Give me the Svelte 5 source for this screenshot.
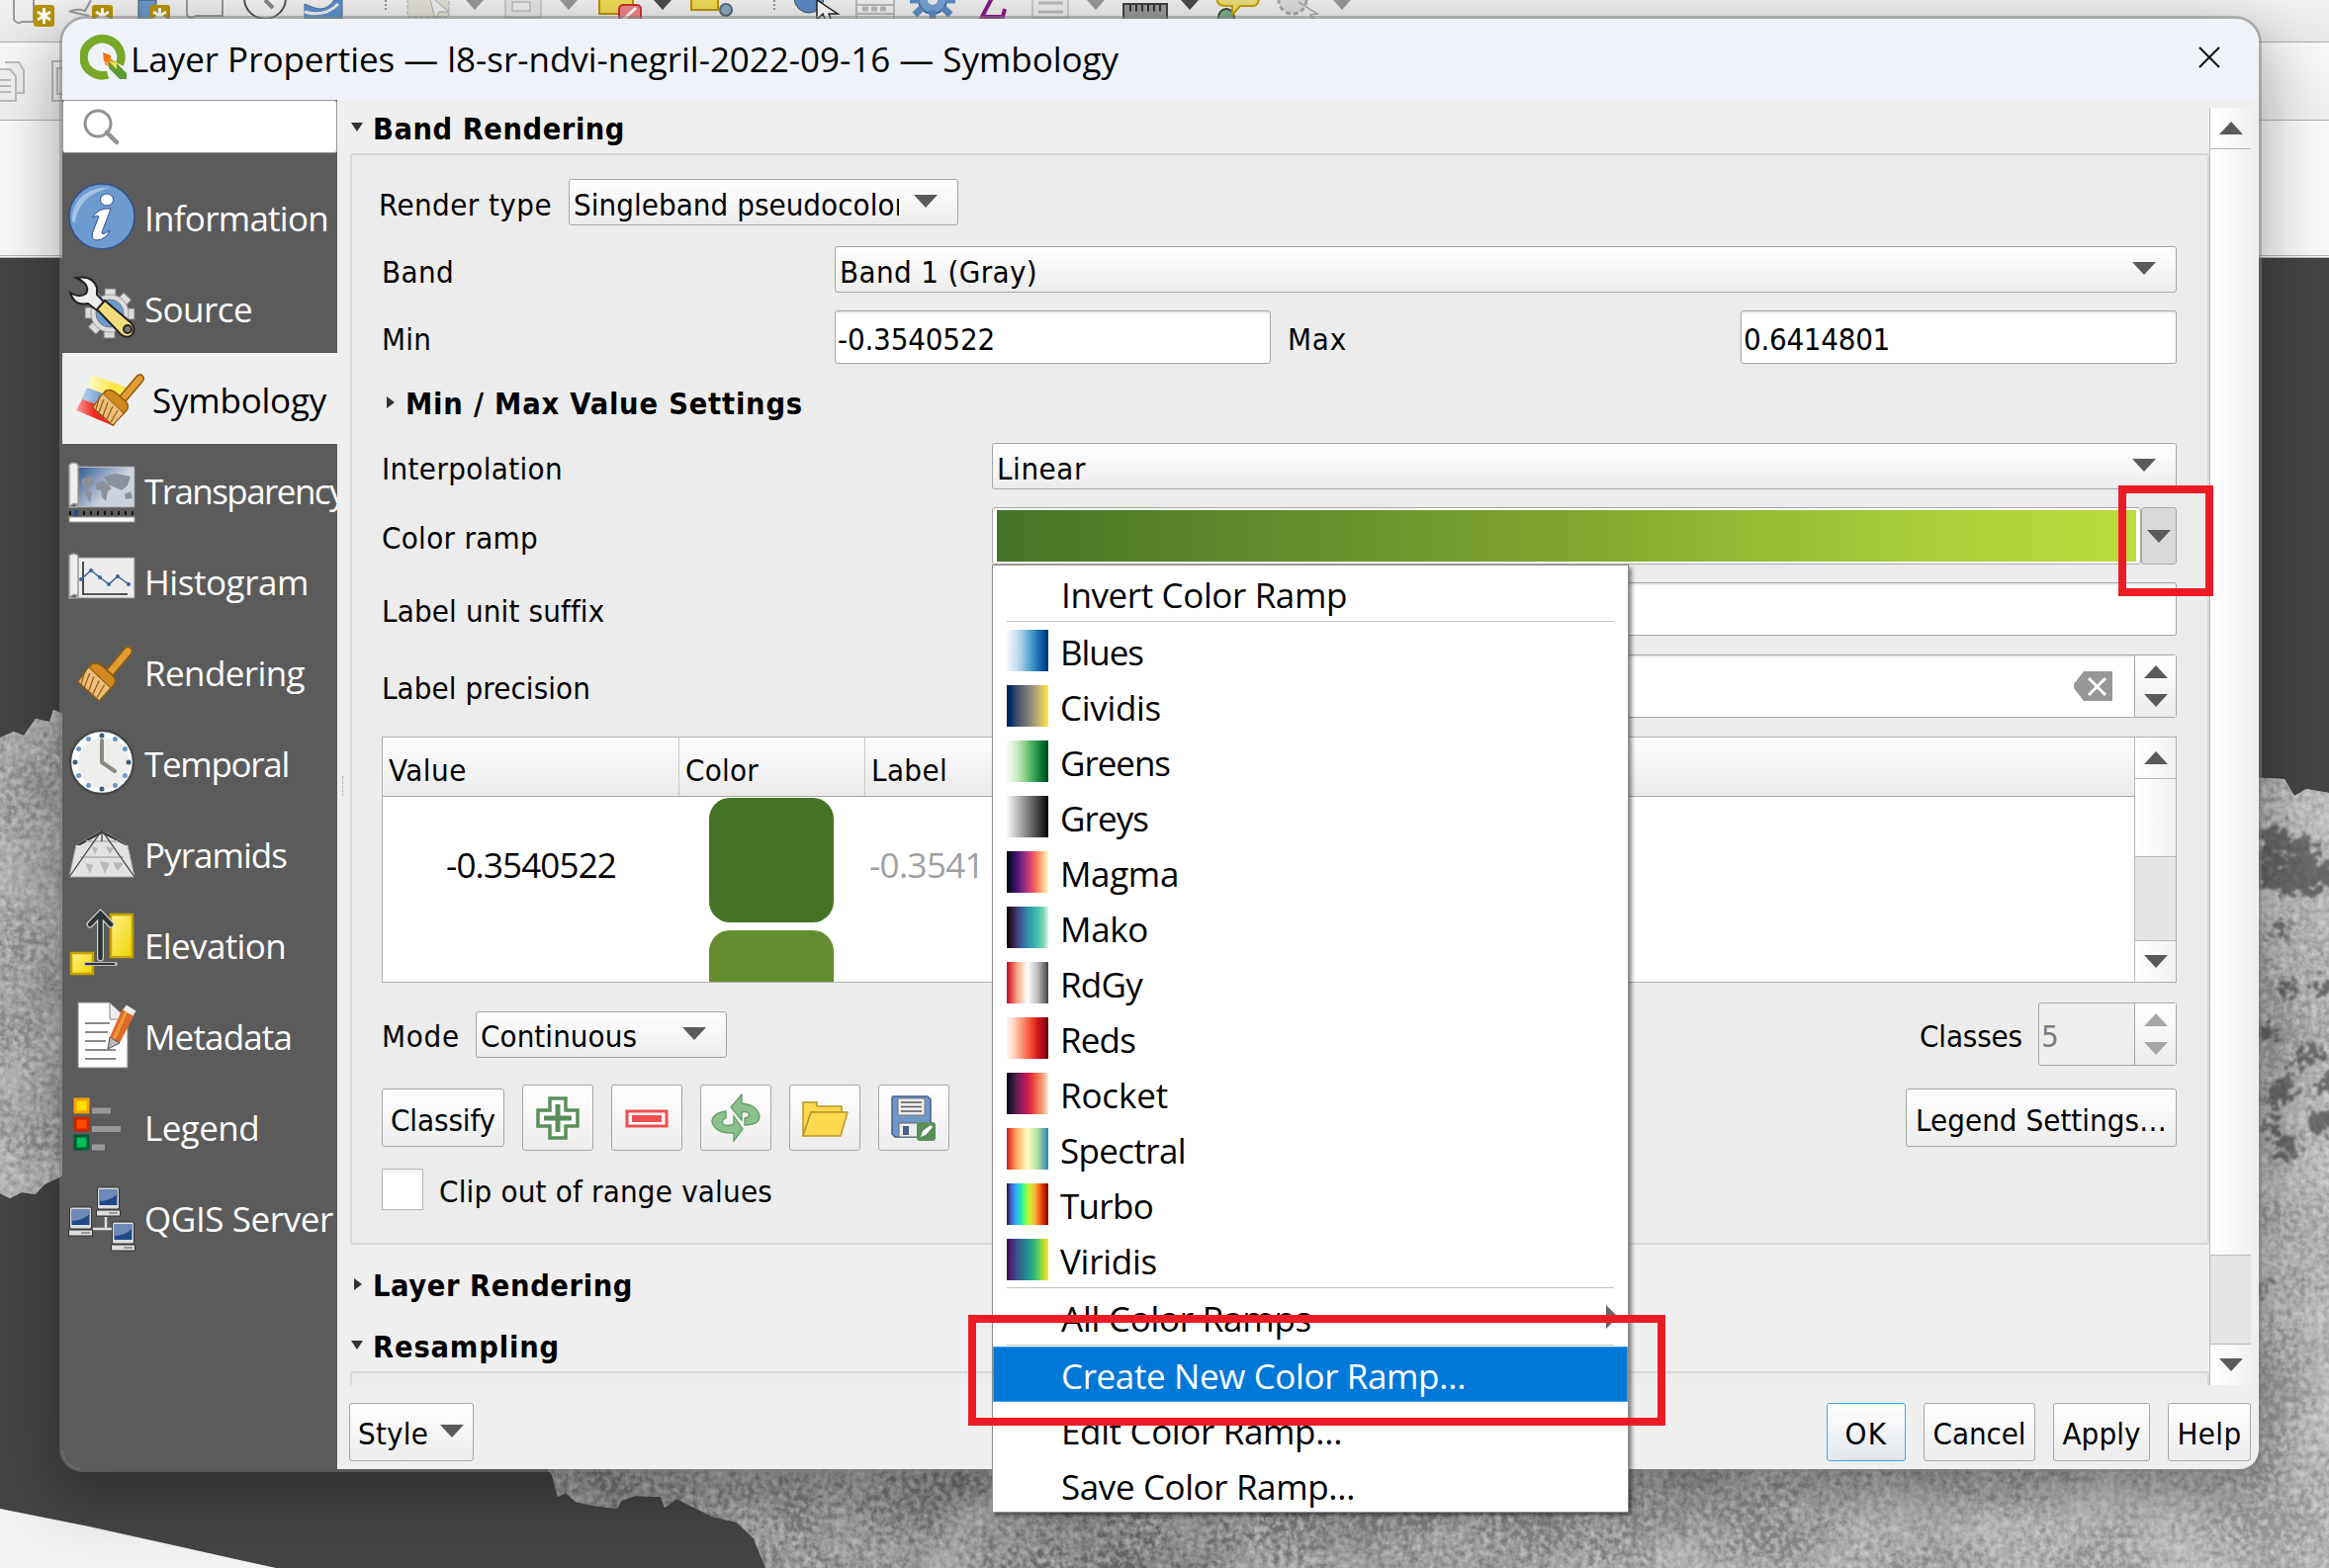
<script lang="ts">
  // Spreads a label's letters so that it takes the given width.
  function fit(node: HTMLElement, width: number) {
    if (!width) return;
    const natural = node.getBoundingClientRect().width;
    const count = (node.textContent ?? '').length;
    node.style.letterSpacing = `${(width - natural) / count}px`;
  }

  const nav = [
    { id: 'info', label: 'Information', w: 186 },
    { id: 'source', label: 'Source', w: 109 },
    { id: 'symbology', label: 'Symbology', w: 176, active: true },
    { id: 'transparency', label: 'Transparency', w: 203 },
    { id: 'histogram', label: 'Histogram', w: 166 },
    { id: 'rendering', label: 'Rendering', w: 162 },
    { id: 'temporal', label: 'Temporal', w: 146 },
    { id: 'pyramids', label: 'Pyramids', w: 144 },
    { id: 'elevation', label: 'Elevation', w: 143 },
    { id: 'metadata', label: 'Metadata', w: 149 },
    { id: 'legend', label: 'Legend', w: 116 },
    { id: 'server', label: 'QGIS Server', w: 191 }
  ];

  const ramps = [
    { name: 'Blues', w: 84, stops: '#f7fbff,#deebf7,#c6dbef,#9ecae1,#6baed6,#4292c6,#2171b5,#08519c,#08306b' },
    { name: 'Cividis', w: 102, stops: '#00204c,#00306f,#39486b,#575d6d,#707173,#8a8779,#a69d75,#c4b56c,#e4cf5b,#ffe945' },
    { name: 'Greens', w: 111, stops: '#f7fcf5,#e5f5e0,#c7e9c0,#a1d99b,#74c476,#41ab5d,#238b45,#006d2c,#00441b' },
    { name: 'Greys', w: 89, stops: '#fafafa,#050505' },
    { name: 'Magma', w: 120, stops: '#000004,#180f3d,#440f76,#721f81,#9e2f7f,#cd4071,#f1605d,#fd9668,#feca8d,#fcfdbf' },
    { name: 'Mako', w: 89, stops: '#0b0405,#2b1c35,#413e7e,#38639d,#348fa7,#37a6ac,#49c1ad,#78d6ae,#def5e5' },
    { name: 'RdGy', w: 83, stops: '#ca0020,#f4a582,#ffffff,#bababa,#404040' },
    { name: 'Reds', w: 76, stops: '#fff5f0,#fee0d2,#fcbba1,#fc9272,#fb6a4a,#ef3b2c,#cb181d,#a50f15,#67000d' },
    { name: 'Rocket', w: 109, stops: '#03051a,#30173a,#611f53,#a11a5b,#cb1b4f,#e83f3f,#f37651,#f6a47c,#faebdd' },
    { name: 'Spectral', w: 127, stops: '#d7191c,#fdae61,#ffffbf,#abdda4,#2b83ba' },
    { name: 'Turbo', w: 94, stops: '#30123b,#4662d7,#36aaf9,#1ae4b6,#72fe5e,#c8ef34,#faba39,#f66b19,#ca2a04,#7a0403' },
    { name: 'Viridis', w: 98, stops: '#440154,#482878,#3e4a89,#31688e,#26828e,#1f9e89,#35b779,#6dcd59,#b4de2c,#fde725' }
  ];

  const clockDots = Array.from({ length: 12 }, (_, i) => {
    const a = (i * Math.PI) / 6;
    return { x: 34 + 27 * Math.sin(a), y: 34 - 27 * Math.cos(a), major: i % 3 === 0 };
  });
  const teeth = [0, 45, 90, 135, 180, 225, 270, 315];
  const monitors = [[28, 3], [0, 23], [43, 38]];
  const chart = [[13, 33], [23, 24], [32, 31], [41, 38], [50, 30], [61, 38]];
  const blots = [[2300, 850, 16], [2326, 860, 14], [2332, 885, 20], [2296, 882, 18], [2350, 885, 12], [2312, 895, 11], [2345, 1000, 8], [2306, 940, 7], [2312, 1000, 8], [2292, 1046, 9], [2340, 1065, 9], [2325, 1072, 10], [2310, 1100, 12], [2300, 1114, 9], [2352, 1096, 9], [2296, 1140, 8], [2350, 1134, 13], [2312, 1160, 11], [2290, 1304, 6]];
</script>

{#snippet T(text: string, w: number, cls: string = 'tah')}
  <span class="t {cls}" use:fit={w}>{text}</span>
{/snippet}

{#snippet Tri(dir: string, dim: boolean = false)}
  <svg class="tri" class:dim width="24" height="13" viewBox="0 0 24 13">
    {#if dir === 'up'}<path d="M12 0L24 13H0z" />{:else}<path d="M0 0H24L12 13z" />{/if}
  </svg>
{/snippet}

{#snippet Brush()}
  <path d="M44 32L60 13Q64 8 67 11T66 18L50 37z" fill="#e39c33" stroke="#8f5b0d" stroke-width="1.5" />
  <path d="M30 26Q36 24 41 29L50 37Q54 41 51 46L37 61L17 43z" fill="#d18a1f" stroke="#8f5b0d" stroke-width="1.5" />
  <path d="M27 29L48 49L37 61L17 43z" fill="#edbe7c" stroke="#8f5b0d" />
  <path d="M24 31L20 45M28 35L23 48M32 38L27 52M37 42L31 55M42 46L35 58" stroke="#8f5b0d" stroke-width="1.2" />
{/snippet}

{#snippet Sheet()}
  <rect x="8" y="11" width="59" height="41" fill="#ececec" stroke="#888" />
{/snippet}
{#snippet Roll()}
  <path d="M1 51V9Q6 5 10 9V50Q6 47 3 50T1 52H10" fill="#eee" stroke="#999" stroke-width="1.5" />
{/snippet}

{#snippet NavIcon(id: string)}
  <svg class="navicon" width="68" height="68" viewBox="0 0 68 68" fill="none">
    {#if id === 'info'}
      <circle cx="34" cy="34" r="33" fill="#6d9bd0" stroke="#35508c" stroke-width="1.5" />
      <path d="M4 39C3 17 21 3 43 5C24 9 10 19 7 40z" fill="#a5c2e4" />
      <ellipse cx="39" cy="17" rx="6.5" ry="6" fill="#fff" stroke="#35508c" />
      <path d="M25 34Q31 25 43 26L34 50Q34 54 42 48Q39 57 29 58Q22 58 25 49L31 34Q29 32 25 35z" fill="#fff" stroke="#35508c" />
    {:else if id === 'source'}
      {#each teeth as a}<rect x="37" y="15" width="11" height="12" fill="#ddd" stroke="#777" transform="rotate({a} 42 40)" />{/each}
      <circle cx="42" cy="40" r="19" fill="#ddd" stroke="#999" />
      <circle cx="42" cy="40" r="14" fill="#6d9bd0" stroke="#777" />
      <path d="M8 4Q25 1 29 14V21L37 29L29 37L20 30Q6 33 2 19Q11 25 18 20Q23 11 8 4z" fill="#eee" stroke="#222" stroke-width="2" />
      <path d="M29 36L37 27L64 50Q69 57 64 62Q59 66 53 61z" fill="#f2dc7c" stroke="#222" stroke-width="2" />
      <circle cx="60" cy="56" r="4" fill="#777" stroke="#222" stroke-width="2" />
    {:else if id === 'symbology'}
      <path d="M16 10L54 24L49 38L11 24z" fill="url(#gy)" /><path d="M11 23L49 37L43 50L5 36z" fill="url(#gb)" /><path d="M6 35L44 48L38 62L0 46z" fill="url(#gr)" />
      {@render Brush()}
    {:else if id === 'transparency'}
      {@render Sheet()}
      <rect x="9" y="12" width="57" height="39" fill="url(#gmap)" />
      <path d="M13 24L24 20L26 28L18 34L24 37L22 48L17 38zM28 28L36 25L44 33L40 36L38 46L34 42L33 35L28 34zM36 21L48 18L63 21L60 30L54 35L47 32L40 29zM57 39L63 36L65 43L58 44z" fill="#8c929c" />
      {@render Roll()}
      <path d="M1 58H67" stroke="#111" stroke-width="4" stroke-dasharray="2 5" /><rect x="6" y="55" width="4" height="8" fill="#234a85" />
      <rect x="1" y="62" width="66" height="5" fill="#fff" stroke="#999" />
    {:else if id === 'histogram'}
      {@render Sheet()}
      {@render Roll()}
      <path d="M15 15V48H60" stroke="#222" stroke-width="1.6" />
      <polyline points={chart.map((p) => p.join(',')).join(' ')} stroke="#3c6199" stroke-width="1.5" />
      {#each chart as [x, y]}<circle cx={x} cy={y} r="2" fill="#3c6199" />{/each}
    {:else if id === 'rendering'}
      <g transform="translate(-8 -1) scale(1.06)">{@render Brush()}</g>
    {:else if id === 'temporal'}
      <circle cx="34" cy="34" r="32" fill="#fff" stroke="#474747" stroke-width="2.5" />
      <circle cx="36" cy="35" r="26" fill="#eeeeec" />
      {#each clockDots as d}<circle cx={d.x} cy={d.y} r="2.5" fill={d.major ? '#3b5b7c' : '#6d97c8'} />{/each}
      <path d="M34 12V34L47 43" stroke="#888a85" stroke-width="4" stroke-linecap="round" stroke-linejoin="round" />
    {:else if id === 'pyramids'}
      <path d="M34 11L60 26L67 58H1L8 26z" fill="#e2e2e2" stroke="#aaa" />
      <path d="M34 11L8 26L12 26L34 14L58 26H60z" fill="#333" /><path d="M18 22H50M12 38H56" stroke="#bbb" stroke-width="2" />
      <path d="M17 44L25 46L22 55zM32 42L42 44L37 55zM45 43L56 44L50 52zM24 27L30 29L27 35zM38 27L46 29L42 35z" fill="#b8b8b8" />
      <path d="M1 58L34 11L67 58M34 11V22" stroke="#444" stroke-width="1.3" />
    {:else if id === 'elevation'}
      <rect x="43" y="4" width="22" height="43" fill="url(#gye)" stroke="#c4a000" stroke-width="2.5" />
      <rect x="3" y="43" width="22" height="21" fill="url(#gye)" stroke="#c4a000" stroke-width="2.5" />
      <path d="M22 14L32.500 3L43 14M32.500 4V48" stroke="#ccc" stroke-width="7" stroke-linecap="round" />
      <path d="M18 54H48" stroke="#bbb" stroke-width="4" stroke-linecap="round" /><path d="M17 54H47" stroke="#2e3436" stroke-width="2" />
      <path d="M22 14L32.500 3L43 14M32.500 4V48" stroke="#2e3436" stroke-width="4.500" stroke-linecap="round" />
    {:else if id === 'metadata'}
      <path d="M10 1H42L60 19V67H10z" fill="#fff" stroke="#888" /><path d="M42 1V18H60z" fill="#eee" stroke="#888" />
      <path d="M17 22H42M17 31H40M17 40H38M17 49H48M17 58H48" stroke="#8a8a8a" stroke-width="2" />
      <path d="M55 7L67 13L52 42L40 48L42 36z" fill="#dd6a2c" /><path d="M59 10L46 38" stroke="#f49b3a" stroke-width="3" /><path d="M42 36L40 48L52 42z" fill="#bbb" stroke="#555" /><path d="M57 6L67 12" stroke="#eee" stroke-width="6" />
    {:else if id === 'legend'}
      <rect x="7" y="7" width="13" height="13" fill="#ffdf00" stroke="#ffa000" stroke-width="3" />
      <rect x="7" y="26" width="13" height="12" fill="#ff4800" stroke="#c52800" stroke-width="3" />
      <rect x="7" y="44" width="13" height="13" fill="#00bd55" stroke="#05573a" stroke-width="3" />
      <path d="M24 18.500H43M24 37H53M24 55.500H37" stroke="#999" stroke-width="6" />
    {:else}
      <path d="M38 34V46M25 46H44" stroke="#ddd" stroke-width="2.500" />
      {#each monitors as [x, y]}
        <g transform="translate({x} {y})"><rect x="1.500" y="1" width="22" height="22" rx="2" fill="#ddd" stroke="#333" /><rect x="3.500" y="3" width="18" height="16" fill="#204a87" /><path d="M3.500 3H21.500V8Q14 15 3.500 15z" fill="#6c8ab5" /><rect x="0.500" y="24" width="24" height="6" fill="#ddd" stroke="#333" /><path d="M13 27H22" stroke="#999" stroke-width="2" /></g>
      {/each}
    {/if}
  </svg>
{/snippet}

<div class="stage">
  <svg width="0" height="0" class="defs">
    <defs>
      <linearGradient id="gy"><stop stop-color="#fffad0" /><stop offset=".6" stop-color="#fbe84a" /></linearGradient>
      <linearGradient id="gb"><stop stop-color="#bcd3ec" /><stop offset=".5" stop-color="#6d9bd0" /></linearGradient>
      <linearGradient id="gr"><stop stop-color="#f9a09c" /><stop offset=".4" stop-color="#ee2b26" /></linearGradient>
      <linearGradient id="gmap" x2="1" y2=".6"><stop stop-color="#2f5994" /><stop offset=".7" stop-color="#ccd2dc" /></linearGradient>
      <linearGradient id="gye" x2="1" y2="1"><stop stop-color="#fff08a" /><stop offset="1" stop-color="#eed500" /></linearGradient>
    </defs>
  </svg>

  <div class="app">
    <div class="bar one">
      <svg width="1400" height="42" viewBox="0 0 1400 42" fill="none">
        <path d="M14 0V20Q18 25 22 22H34V0M70 12Q78 8 86 11L92 0M72 12L90 16M189 0V15Q192 20 198 16H225V0" fill="#eee" stroke="#999" stroke-width="2" />
        <rect x="140" width="18" height="20" fill="#6b98cc" stroke="#456" />
        {#each [34, 93, 151] as x}
          <rect x={x} y="5" width="21" height="22" rx="3" fill="#b99400" />
          <path d="M{x + 10.5} 8V24M{x + 4} 12L{x + 17} 20M{x + 17} 12L{x + 4} 20" stroke="#fff" stroke-width="3" />
        {/each}
        <circle cx="268" cy="-2" r="21" fill="#f4f4f2" stroke="#555" stroke-width="2" /><path d="M268 0L276 8" stroke="#888" stroke-width="4" />
        <path d="M308 18V4L318 8Q330 12 338 0H346V20H308z" fill="#5c92cc" stroke="#47719f" /><path d="M308 12Q328 18 342 4" stroke="#eee" stroke-width="3" />
        <path d="M390 0V12M783 0V12" stroke="#999" stroke-width="2" stroke-dasharray="2 2" />
        <rect x="412" y="-5" width="42" height="22" fill="#e3e0d5" stroke="#aaa" stroke-dasharray="4 2" /><path d="M434 -5L454 12L444 12L440 20z" fill="#eee" stroke="#aaa" />
        <rect x="511" y="-4" width="36" height="22" fill="#e6e6e6" stroke="#aaa" /><rect x="518" y="2" width="18" height="9" fill="#eee" stroke="#aaa" />
        <rect x="606" y="-4" width="34" height="18" fill="#f2dc55" stroke="#b99400" stroke-width="2" /><rect x="626" y="5" width="22" height="20" rx="4" fill="#e88" stroke="#c33" stroke-width="2" /><path d="M630 20L643 8" stroke="#fff" stroke-width="3" />
        <rect x="699" y="-4" width="27" height="14" fill="#f2dc55" stroke="#b99400" stroke-width="2" /><circle cx="734" cy="10" r="6" fill="#8ab" stroke="#567" stroke-width="2" />
        <circle cx="818" cy="-2" r="15" fill="#5c8cc5" stroke="#456" /><path d="M826 0L847 14L838 14L842 24L836 24L832 14L826 20z" fill="#fff" stroke="#222" stroke-width="1.500" />
        <path d="M866 0V20H904V0M866 5H904M866 14H904" stroke="#bbb" stroke-width="2" /><path d="M872 9H898" stroke="#bbb" stroke-width="5" stroke-dasharray="6 3" />
        <circle cx="943" cy="0" r="14" fill="#76a2d6" stroke="#3f6ca3" stroke-width="2" /><path d="M943 10V19M932 8L925 15M954 8L961 15M930 0H920M956 0H966" stroke="#5f8cc2" stroke-width="7" /><circle cx="943" cy="0" r="5" fill="#eee" />
        <path d="M1004 -4L993 17H1014L1016 9" stroke="#8b1a8b" stroke-width="4" />
        <path d="M1044 0V18H1080V0" stroke="#ccc" fill="#eee" stroke-width="2" /><path d="M1050 3H1075M1050 12H1075" stroke="#bbb" stroke-width="3" />
        <rect x="1136" y="4" width="44" height="18" fill="#999" stroke="#444" stroke-width="2" /><path d="M1142 8H1178" stroke="#333" stroke-width="7" stroke-dasharray="2 4" />
        <ellipse cx="1240" cy="18" rx="8" ry="9" fill="#7fb08a" stroke="#444" stroke-width="2" /><path d="M1231 -4V2Q1233 6 1240 6H1246V15L1254 6H1268Q1273 5 1273 -4z" fill="#ecdf7c" stroke="#c4a000" stroke-width="2" />
        <circle cx="1307" cy="0" r="14" fill="#ddd" stroke="#aaa" stroke-width="3" stroke-dasharray="5 3" /><path d="M1313 2L1332 14L1325 15L1330 21" stroke="#aaa" fill="#eee" stroke-width="1.500" />
        {#each [[480, 0], [575, 0], [670, 1], [1108, 0], [1203, 1], [1357, 0]] as [x, dark]}
          <path d="M{x - 9} 0H{x + 9}L{x} 10z" fill={dark ? '#4c4c4c' : '#999'} />
        {/each}
      </svg>
    </div>
    <div class="bar two">
      <svg width="64" height="76" viewBox="0 0 64 76" fill="none" stroke="#bbb" stroke-width="2">
        <path d="M5 19H19L24 27V50H16" fill="#eee" /><path d="M-5 26H10L16 33V58H-5z" fill="#eee" /><path d="M0 37H11M0 43H11M0 49H11" /><rect x="53" y="18" width="20" height="40" /><rect x="58" y="25" width="20" height="26" />
      </svg>
    </div>
    <div class="bar three"></div>
    <svg class="map" width="2355" height="1327" viewBox="0 261 2355 1327" preserveAspectRatio="none">
      <defs>
        <filter id="grain" x="0" y="0" width="100%" height="100%">
          <feTurbulence type="fractalNoise" baseFrequency="0.012 0.014" numOctaves="4" seed="8" result="big" />
          <feTurbulence type="fractalNoise" baseFrequency="0.16" numOctaves="4" seed="3" result="fine" />
          <feComposite in="big" in2="fine" operator="arithmetic" k2="0.5" k3="0.8" k4="-0.15" />
          <feColorMatrix values="1.1 0.2 0 0 -0.17  1.1 0.2 0 0 -0.17  1.1 0.2 0 0 -0.17  0 0 0 0 1" result="n" />
          <feComposite in="n" in2="SourceGraphic" operator="in" />
          <feBlend in2="SourceGraphic" mode="soft-light" />
        </filter>
        <filter id="edge"><feTurbulence type="fractalNoise" baseFrequency=".12" numOctaves="4" /><feDisplacementMap in="SourceGraphic" scale="34" xChannelSelector="R" yChannelSelector="G" /><feGaussianBlur stdDeviation="1" /></filter>
        <linearGradient id="land"><stop stop-color="#a8a8a8" /><stop offset=".12" stop-color="#b4b4b4" /><stop offset=".35" stop-color="#a0a0a0" /><stop offset=".42" stop-color="#b0b0b0" /><stop offset="1" stop-color="#c6c6c6" /></linearGradient>
      </defs>
      <rect y="259" width="2355" height="1329" fill="#444" />
      <g filter="url(#grain)">
        <path fill="#bdbdbd" d="M0 746L14 740L24 744L36 727L50 730L54 718L66 723V1188L45 1198L36 1208L22 1206L10 1212L0 1207z" />
        <path fill="url(#land)" d="M550 1480L558 1492L564 1514L572 1510L582 1519L600 1523L624 1526L628 1518L642 1513L668 1514L672 1525L684 1516L700 1524L720 1534L745 1540L762 1556L775 1588H2355V802L2332 798L2320 805L2310 788L2270 786V1480z" />
      </g>
      <g fill="#4c4c4c" opacity=".7" filter="url(#edge)">
        {#each blots as [x, y, r]}<circle cx={x} cy={y} {r} />{/each}
      </g>
      <path fill="#f2f2f2" d="M0 1526L90 1544L180 1564L288 1588H0z" />
    </svg>
  </div>

  <div class="dialog">
    <div class="titlebar">
      <svg width="48" height="48" viewBox="0 0 48 48" fill="none">
        <path d="M25 22L34 27L32 36L25 31z" fill="#f5a040" /><path d="M23 19L31 22V29L24 28z" fill="#ee7913" />
        <path d="M40 31A19 18.500 0 1 0 28 41.500" stroke="#79a929" stroke-width="8.500" />
        <path d="M29 28H35L47 40V46H40L29 35z" fill="#5d9b35" /><path d="M29 28L37 29V36z" fill="#f0e64a" />
      </svg>
      {@render T('Layer Properties — l8-sr-ndvi-negril-2022-09-16 — Symbology', 999, 'seg')}
      <svg class="close" width="22" height="22" viewBox="0 0 22 22"><path d="M1 1L21 21M21 1L1 21" stroke="#111" stroke-width="2" /></svg>
    </div>

    <div class="body">
      <nav>
        <div class="search">
          <svg width="38" height="38" viewBox="0 0 38 38" fill="none" stroke="#929292"><circle cx="16" cy="16" r="13" stroke-width="3" /><path d="M25 25L35 35" stroke-width="4.500" stroke-linecap="round" /></svg>
        </div>
        {#each nav as item}
          <div class="item" class:active={item.active}>
            {@render NavIcon(item.id)}
            {@render T(item.label, item.w, 'seg')}
          </div>
        {/each}
      </nav>

      <div class="split"><i></i></div>

      <div class="main">
        <div class="view">
          <div class="content">
            <div class="head h1"><svg width="12" height="10" viewBox="0 0 12 10"><path d="M0 0H12L6 9z" /></svg>{@render T('Band Rendering', 255, 'tah b')}</div>

            <div class="group">
              <div class="row r1">
                <div class="lab rt">{@render T('Render type', 175)}</div>
                <div class="combo rtype"><div class="clip">{@render T('Singleband pseudocolor', 336)}</div>{@render Tri('down')}</div>
              </div>
              <div class="row r2">
                <div class="lab l1">{@render T('Band', 73)}</div>
                <div class="combo grow">{@render T('Band 1 (Gray)', 200)}{@render Tri('down')}</div>
              </div>
              <div class="row r3">
                <div class="lab l1">{@render T('Min', 50)}</div>
                <div class="input num">{@render T('-0.3540522', 159)}</div>
                <div class="lab max">{@render T('Max', 60)}</div>
                <div class="input num">{@render T('0.6414801', 148)}</div>
              </div>
              <div class="row r4"><svg width="8" height="12" viewBox="0 0 8 12"><path d="M0 0L8 6L0 12z" /></svg>{@render T('Min / Max Value Settings', 402, 'tah b')}</div>
              <div class="row r5">
                <div class="lab l2">{@render T('Interpolation', 183)}</div>
                <div class="combo grow">{@render T('Linear', 90)}{@render Tri('down')}</div>
              </div>
              <div class="row r6">
                <div class="lab l2">{@render T('Color ramp', 158)}</div>
                <div class="ramp"><div></div></div>
                <div class="drop">{@render Tri('down')}</div>
              </div>
              <div class="row r7">
                <div class="lab l2">{@render T('Label unit suffix', 225)}</div>
                <div class="input grow"></div>
              </div>
              <div class="row r8">
                <div class="lab l2">{@render T('Label precision', 211)}</div>
                <div class="input spin grow">
                  <svg class="clear" width="40" height="30" viewBox="0 0 40 30"><path d="M11 0H40V30H11L1 17V13z" fill="#979797" /><path d="M16 7L33 24M33 7L16 24" stroke="#fff" stroke-width="3" /></svg>
                  <div class="steps">{@render Tri('up')}{@render Tri('down')}</div>
                </div>
              </div>

              <div class="table">
                <div class="cells">
                  <div class="thead">
                    <div class="c1">{@render T('Value', 79)}</div>
                    <div class="c2">{@render T('Color', 74)}</div>
                    <div class="c3">{@render T('Label', 77)}</div>
                  </div>
                  <div class="tbody">
                    <div class="c1">{@render T('-0.3540522', 172, 'seg')}</div>
                    <div class="c2"><b></b><b class="second"></b></div>
                    <div class="c3">{@render T('-0.3541', 116, 'seg dimtext')}</div>
                  </div>
                </div>
                <div class="scroll">
                  <div class="sb up">{@render Tri('up')}</div>
                  <div class="thumb"></div>
                  <div class="sb dn">{@render Tri('down')}</div>
                </div>
              </div>

              <div class="row r9">
                <div class="lab mode">{@render T('Mode', 79)}</div>
                <div class="combo cont">{@render T('Continuous', 158)}{@render Tri('down')}</div>
                <span class="fill"></span>
                {@render T('Classes', 104)}
                <div class="input spin five">{@render T('5', 19, 'tah gray')}<div class="steps">{@render Tri('up', true)}{@render Tri('down', true)}</div></div>
              </div>
              <div class="row r10">
                <div class="btn classify">{@render T('Classify', 106)}</div>
                <div class="ib"><svg width="44" height="44" viewBox="0 0 44 44"><path d="M14 2H30V14H42V30H30V42H14V30H2V14H14z" fill="#fff" stroke="#5a8f5a" stroke-width="3.500" /><path d="M22 8V36M8 22H36" stroke="#5a8f5a" stroke-width="5" /></svg></div>
                <div class="ib"><svg width="44" height="44" viewBox="0 0 44 44"><rect x="2" y="15" width="40" height="15" fill="#fff" stroke="#f05050" stroke-width="3" /><rect x="7" y="19" width="30" height="7" fill="#f05050" /></svg></div>
                <div class="ib"><svg width="50" height="50" viewBox="0 0 50 50"><path d="M31 1V10Q48 12 49 24Q48 32 34 32V25Q40 24 38 20Q36 18 31 19V27L20 14zM23 48V40Q5 41 1 29Q1 20 15 18V25Q10 27 12 31Q16 34 23 31V23L32 36z" fill="#8cc08c" stroke="#5f9f64" stroke-width="1.300" /></svg></div>
                <div class="ib"><svg width="50" height="44" viewBox="0 0 50 44"><path d="M3 40V6H17V10H42V16H11z" fill="#fcd94e" stroke="#b8952a" stroke-width="1.500" /><path d="M11 16H48L41 40H3z" fill="#fcd94e" stroke="#b8952a" stroke-width="1.500" /></svg></div>
                <div class="ib"><svg width="48" height="48" viewBox="0 0 48 48"><path d="M3 2H38L41 5V43H5L2 40V3z" fill="#6e97c6" stroke="#41618c" stroke-width="1.500" /><rect x="8" y="4" width="27" height="17" fill="#eee" stroke="#777" /><path d="M11 8H32M11 12.500H32M11 17H32" stroke="#555" stroke-width="1.500" /><rect x="9" y="29" width="23" height="14" fill="#eee" stroke="#666" /><rect x="13" y="32" width="6" height="9" fill="#41618c" /><rect x="27" y="28" width="19" height="19" rx="3" fill="#5a8f5a" /><path d="M31 43L33 37L41 31L43 33L36 41z" fill="#fff" /></svg></div>
                <span class="fill"></span>
                <div class="btn legend">{@render T('Legend Settings…', 254)}</div>
              </div>
              <div class="row r11"><i class="check"></i>{@render T('Clip out of range values', 337)}</div>
            </div>

            <div class="head h2"><svg width="8" height="12" viewBox="0 0 8 12"><path d="M0 0L8 6L0 12z" /></svg>{@render T('Layer Rendering', 263, 'tah b')}</div>
            <div class="head h3"><svg width="12" height="10" viewBox="0 0 12 10"><path d="M0 0H12L6 9z" /></svg>{@render T('Resampling', 189, 'tah b')}</div>
            <div class="group peek"></div>
          </div>
          <div class="scroll outer">
            <div class="sb up">{@render Tri('up')}</div>
            <div class="thumb"></div>
            <div class="sb dn">{@render Tri('down')}</div>
          </div>
        </div>

        <div class="footer">
          <div class="btn style">{@render T('Style', 71)}{@render Tri('down')}</div>
          <span class="fill"></span>
          <div class="btn ok">{@render T('OK', 43)}</div>
          <div class="btn cancel">{@render T('Cancel', 94)}</div>
          <div class="btn apply">{@render T('Apply', 79)}</div>
          <div class="btn help">{@render T('Help', 65)}</div>
        </div>
      </div>
    </div>
  </div>

  <div class="menu">
    <div class="mi">{@render T('Invert Color Ramp', 289, 'seg')}</div>
    <hr />
    {#each ramps as r}
      <div class="mi"><i class="swatch" style="background:linear-gradient(90deg,{r.stops})"></i>{@render T(r.name, r.w, 'seg')}</div>
    {/each}
    <hr />
    <div class="mi all">{@render T('All Color Ramps', 253, 'seg')}<svg width="12" height="24" viewBox="0 0 12 24"><path d="M0 0L12 12L0 24z" fill="#666" /></svg></div>
    <hr />
    <div class="mi sel">{@render T('Create New Color Ramp…', 409, 'seg')}</div>
    <div class="mi">{@render T('Edit Color Ramp…', 284, 'seg')}</div>
    <div class="mi">{@render T('Save Color Ramp…', 297, 'seg')}</div>
  </div>

  <div class="mark arrowmark"></div>
  <div class="mark createmark"></div>
</div>

<style>
  :global(body) { margin: 0; overflow: hidden; }
  .stage { position: relative; width: 2355px; height: 1586px; overflow: hidden; color: #000; }
  .stage :global(*) { box-sizing: border-box; }
  .defs { position: absolute; }
  svg { display: block; flex: none; }
  .t { display: inline-block; white-space: nowrap; flex: none; }
  .tah { font: 31px/40px "DejaVu Sans Condensed", "DejaVu Sans", sans-serif; font-stretch: condensed; padding-top: 4px; }
  .b { font-weight: 700; font-size: 30.5px; }
  .seg { font: 35px/48px "Open Sans", "Noto Sans", sans-serif; }
  .gray { color: #7c7c7c; }
  .dimtext { color: #a0a0a4; }
  .fill { flex: 1; }

  .app { width: 2355px; height: 1586px; display: flex; flex-direction: column; overflow: hidden; }
  .bar { flex: none; overflow: hidden; }
  .one { height: 43px; background: linear-gradient(#f2f2f2, #e8e8e8); border-bottom: 1px solid #aaa; }
  .two { height: 79px; background: linear-gradient(#f8f8f8, #eee); border-bottom: 1px solid #b4b4b4; }
  .two svg { margin-top: 1px; }
  .three { height: 139px; background: #f8f8f8; border-bottom: 3px double #b8b8b8; }
  .map { flex: none; }

  .dialog { position: absolute; left: 63px; top: 19px; width: 2221px; height: 1467px; border-radius: 24px 24px 20px 20px; overflow: hidden; background: #efefef; display: flex; flex-direction: column; box-shadow: 0 0 0 3px rgba(125, 125, 125, .5), 0 20px 60px 8px rgba(0, 0, 0, .3); }
  .titlebar { height: 82px; flex: none; background: #eff3f9; display: flex; align-items: center; padding: 0 39px 0 18px; }
  .titlebar svg { margin-right: 3px; margin-top: -4px; }
  .titlebar .t { margin-top: 0; }
  .titlebar .close { margin: -4px 0 0 auto; }
  .body { display: flex; flex: 1; min-height: 0; }

  nav { width: 278px; flex: none; background: #5b5b5b; overflow: hidden; }
  .search { height: 54px; margin-bottom: 18px; background: #fff; border: 1px solid #999; border-radius: 3px; padding: 7px 0 0 19px; }
  .item { height: 92px; display: flex; align-items: center; gap: 9px; padding-left: 6px; color: #fff; }
  .item .t { padding-top: 4px; }
  .item.active { background: #efefef; color: #000; padding-left: 14px; }
  .navicon { overflow: visible; }

  .split { width: 13px; flex: none; padding: 684px 0 0 5px; }
  .split i { display: block; width: 0; height: 20px; border-left: 1px dotted #999; }
  .main { flex: 1; display: flex; flex-direction: column; min-width: 0; }
  .view { height: 1300px; display: flex; overflow: hidden; }
  .content { width: 1880px; flex: none; }
  .head { display: flex; align-items: center; }
  .head svg, .r4 svg { fill: #333; }
  .h1 { height: 54px; padding: 2px 0 0 1px; gap: 10px; }
  .h2 { height: 80px; padding: 0 0 0 4px; gap: 11px; }
  .h3 { height: 48px; padding: 0 0 4px 1px; gap: 10px; }

  .group { height: 1104px; background: #ececec; border: 2px solid #d9d9d9; border-radius: 3px; padding: 24px 31px 0 30px; overflow: hidden; }
  .peek { height: 40px; padding: 0; }
  .row { display: flex; align-items: center; }
  .r1 { height: 47px; }
  .r2 { height: 47px; margin-top: 21px; }
  .r3 { height: 54px; margin-top: 18px; }
  .r4 { height: 40px; margin-top: 19px; margin-bottom: 1px; padding-left: 5px; gap: 11px; }
  .r5 { height: 47px; margin-top: 21px; }
  .r6 { height: 58px; margin-top: 18px; }
  .r7 { height: 54px; margin-top: 18px; }
  .r8 { height: 64px; margin-top: 19px; }
  .r9 { height: 64px; margin-top: 20px; }
  .r10 { height: 67px; margin-top: 19px; }
  .r11 { height: 42px; margin-top: 18px; gap: 16px; }
  .lab { flex: none; }
  .rt { width: 192px; margin-left: -3px; }
  .l1 { width: 458px; }
  .l2 { width: 617px; }
  .max { width: 475px; padding-left: 17px; }
  .mode { width: 95px; }
  .combo { height: 47px; display: flex; align-items: center; justify-content: space-between; padding: 0 20px 0 4px; border: 1px solid #a6a6a6; border-radius: 3px; background: linear-gradient(#fff, #ececec); }
  .combo .tri { margin-top: -2px; }
  .rtype { width: 394px; }
  .clip { width: 329px; overflow: hidden; }
  .cont { width: 254px; }
  .grow { flex: 1; }
  .tri { fill: #5a5a5a; }
  .tri.dim { fill: #a6a6a6; }
  .input { height: 100%; background: #fff; border: 1px solid #a6a6a6; border-radius: 3px; display: flex; align-items: center; padding-left: 2px; box-shadow: inset 0 2px 1px #eee; }
  .num { width: 441px; }
  .ramp { width: 1162px; height: 58px; background: #fff; border: 1px solid #a6a6a6; border-radius: 3px; padding: 2px 4px; }
  .ramp div { height: 52px; background: linear-gradient(90deg, #457427, #7fa52f 50%, #a6ca38 78%, #bcdd3c); }
  .drop { width: 36px; height: 58px; background: #dadada; border: 1px solid #a6a6a6; border-radius: 3px; display: flex; align-items: center; justify-content: center; }
  .spin { justify-content: flex-end; }
  .steps { width: 42px; height: 100%; border-left: 1px solid #a6a6a6; display: flex; flex-direction: column; justify-content: center; align-items: center; gap: 16px; background: linear-gradient(#fff, #ececec); }
  .clear { margin-right: 22px; }
  .five { width: 140px; margin-left: 16px; justify-content: space-between; background: #efefef; box-shadow: none; }

  .table { margin-top: 19px; height: 249px; border: 1px solid #b0b0b0; background: #fff; display: flex; }
  .cells { flex: 1; display: flex; flex-direction: column; overflow: hidden; }
  .thead { height: 60px; flex: none; display: flex; align-items: center; background: linear-gradient(#fdfdfd, #ebebeb); border-bottom: 1px solid #a6a6a6; }
  .thead div { height: 100%; display: flex; align-items: center; padding: 2px 0 0 6px; }
  .c1 { width: 300px; flex: none; }
  .c2 { width: 188px; flex: none; }
  .thead .c1, .thead .c2 { border-right: 1px solid #c8c8c8; }
  .tbody { height: 187px; display: flex; overflow: hidden; }
  .tbody .c1 { padding: 45px 0 0 64px; }
  .tbody .c2 { padding: 1px 0 0 30px; }
  .tbody .c3 { padding: 45px 0 0 4px; }
  .tbody b { display: block; width: 126px; height: 126px; border-radius: 21px; background: #457427; margin-bottom: 8px; }
  .tbody .second { background: #638d2e; }
  .scroll { width: 42px; flex: none; display: flex; flex-direction: column; background: #e5e5e5; border-left: 1px solid #b8b8b8; }
  .sb { height: 42px; flex: none; display: flex; align-items: center; justify-content: center; background: linear-gradient(90deg, #fff, #f1f1f1); }
  .sb.up { border-bottom: 1px solid #b8b8b8; }
  .sb.dn { border-top: 1px solid #b8b8b8; margin-top: auto; }
  .thumb { height: 79px; background: linear-gradient(90deg, #fff, #f1f1f1); border-bottom: 1px solid #b8b8b8; }
  .outer { margin-top: 8px; }
  .outer .thumb { height: 1119px; }

  .btn { display: flex; align-items: center; justify-content: center; height: 59px; border: 1px solid #a6a6a6; border-radius: 3px; background: linear-gradient(#fff, #ececec); }
  .classify { width: 124px; }
  .ib { width: 72px; height: 67px; margin-left: 18px; display: flex; align-items: center; justify-content: center; border: 1px solid #a6a6a6; border-radius: 3px; background: linear-gradient(#fff, #ececec); }
  .legend { width: 274px; }
  .check { display: block; width: 42px; height: 42px; background: linear-gradient(#eee, #fff 6px); border: 1px solid #b8b8b8; }
  .footer { height: 85px; display: flex; align-items: center; padding: 9px 8px 0 0; margin-left: -1px; }
  .style { width: 126px; gap: 12px; padding-right: 1px; }
  .style .tri { margin-top: -2px; }
  .ok { width: 80px; border-color: #45a7ee; background: linear-gradient(#fff, #e2e7ec); }
  .cancel { width: 113px; margin-left: 18px; }
  .apply { width: 98px; margin-left: 18px; }
  .help { width: 84px; margin-left: 18px; }

  .menu { position: absolute; left: 1003px; top: 571px; width: 644px; height: 959px; background: #fff; border: 1px solid #8e8e8e; box-shadow: 3px 3px 4px rgba(0, 0, 0, .45); }
  .mi { height: 56px; display: flex; align-items: center; padding-left: 69px; }
  .mi .t { padding-top: 3px; }
  .swatch { width: 42px; height: 42px; margin: 0 12px 0 -55px; flex: none; }
  .all { justify-content: space-between; padding-right: 10px; }
  .sel { background: #0078d7; color: #fff; border: 1px solid #38a0f2; padding-left: 68px; }
  hr { height: 2px; margin: 0 14px; border: 0; background: #c4c4c4; border-bottom: 1px solid #fff; }

  .mark { position: absolute; border: 8px solid #ed1c24; }
  .arrowmark { left: 2142px; top: 491px; width: 96px; height: 112px; }
  .createmark { left: 979px; top: 1330px; width: 705px; height: 112px; }
</style>
